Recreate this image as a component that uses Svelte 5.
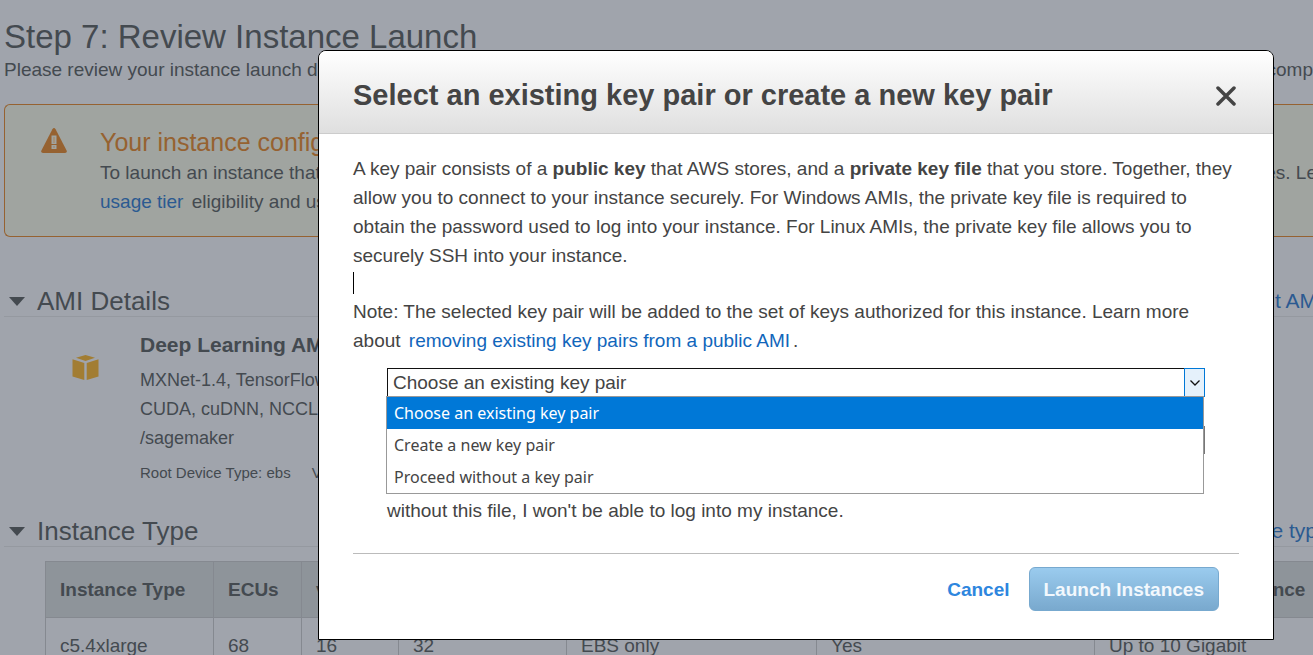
<script>
  const options = [
    'Choose an existing key pair',
    'Create a new key pair',
    'Proceed without a key pair'
  ];
  let chosen = $state(options[0]);
</script>

<div class="page">
  <header class="intro">
    <h1>Step 7: Review Instance Launch</h1>
    <p class="split"><span>Please review your instance launch details.</span><span>comp</span></p>
  </header>

  <section class="alert">
    <svg class="warn" viewBox="0 0 26 25" aria-hidden="true">
      <path d="M11.4 1.2Q13-1 14.6 1.2L25.6 22.4Q26.4 25 24 25H2Q-.4 25 .4 22.4Z" fill="currentColor" />
      <path d="M10.5 7.5h5v8.5h-5zM10.5 17h5v4h-5z" fill="#a0a4a0" />
      <path d="M12 9h2v6h-2zM12 18h2v2h-2z" fill="#a5937c" />
    </svg>
    <div class="alert-text">
      <h2>Your instance configuration</h2>
      <p class="split"><span>To launch an instance that's</span><span class="tail">es. Le</span></p>
      <p><a href="#tier">usage tier</a> eligibility and usage</p>
    </div>
  </section>

  <section class="ami">
    <div class="section-head">
      <svg class="caret" viewBox="0 0 16 9" aria-hidden="true"><path d="M0 0h16L8 9z" fill="currentColor" /></svg>
      <h2>AMI Details</h2>
      <a href="#ami" class="tail">Edit AM</a>
    </div>
    <div class="ami-body">
      <svg class="cube" viewBox="0 0 27 25" aria-hidden="true">
        <path d="M13.5 0 23 2.700 13.500 6 4 2.700zM.5 4.200l11.800 3.900V25L.5 21.500zM26.500 4.200 14.700 8.100V25l11.800-3.500z" fill="currentColor" />
      </svg>
      <div class="ami-text">
        <h3>Deep Learning AMI</h3>
        <p>MXNet-1.4, TensorFlow<br />CUDA, cuDNN, NCCL,<br />/sagemaker</p>
        <div class="facts"><span>Root Device Type: ebs</span><span>Virtualization</span></div>
      </div>
    </div>
  </section>

  <section class="types">
    <div class="section-head">
      <svg class="caret" viewBox="0 0 16 9" aria-hidden="true"><path d="M0 0h16L8 9z" fill="currentColor" /></svg>
      <h2>Instance Type</h2>
      <a href="#types" class="tail">Edit instance typ</a>
    </div>
    <table>
      <thead>
        <tr>
          <th class="c1">Instance Type</th><th class="c2">ECUs</th><th class="c3">vCPUs</th><th class="c4">Memory (GiB)</th>
          <th class="c5">Instance Storage</th><th class="c6">EBS-Optimized</th><th class="c7">Network Performance</th>
        </tr>
      </thead>
      <tbody>
        <tr><td>c5.4xlarge</td><td>68</td><td>16</td><td>32</td><td>EBS only</td><td>Yes</td><td>Up to 10 Gigabit</td></tr>
      </tbody>
    </table>
  </section>
</div>

<div class="overlay">
  <div class="modal" role="dialog" aria-modal="true" aria-labelledby="title">
    <div class="modal-head">
      <h2 id="title">Select an existing key pair or create a new key pair</h2>
      <button class="close" aria-label="Close">
        <svg viewBox="0 0 20 20" aria-hidden="true"><path d="M2 2l16 16M18 2 2 18" stroke="currentColor" stroke-width="3.500" stroke-linecap="round" /></svg>
      </button>
    </div>
    <div class="modal-body">
      <p>
        A key pair consists of a <b>public key</b> that AWS stores, and a <b>private key file</b> that you store. Together, they
        allow you to connect to your instance securely. For Windows AMIs, the private key file is required to obtain the
        password used to log into your instance. For Linux AMIs, the private key file allows you to securely SSH into your
        instance.
      </p>
      <div class="cursor-line"><span></span></div>
      <p>
        Note: The selected key pair will be added to the set of keys authorized for this instance. Learn more about
        <a href="#remove">removing existing key pairs from a public AMI</a>.
      </p>
      <div class="form">
        <div class="combo">
          <select aria-label="Key pair option" bind:value={chosen}>
            {#each options as option}<option>{option}</option>{/each}
          </select>
          <span class="arrow"><svg viewBox="0 0 10 6" aria-hidden="true"><path d="M.5.5 5 5 9.500.5" fill="none" stroke="#111" stroke-width="1.300" /></svg></span>
          <div class="menu" role="listbox" aria-label="Key pair options">
            {#each options as option}
              <button role="option" aria-selected={option === chosen} class:active={option === chosen} onclick={() => (chosen = option)}>{option}</button>
            {/each}
          </div>
        </div>
        <select class="pair" aria-label="Select a key pair"></select>
        <p>without this file, I won't be able to log into my instance.</p>
      </div>
      <div class="modal-foot">
        <button class="cancel">Cancel</button>
        <button class="launch">Launch Instances</button>
      </div>
    </div>
  </div>
</div>

<style>
  :global(body) {
    background: #a0a4ac;
    overflow: hidden;
  }
  h1, h2, h3, p { margin: 0; font-weight: 400; }
  a { text-decoration: none; }
  button { font: inherit; border: 0; background: none; padding: 0; cursor: pointer; }

  .page {
    height: 100vh;
    overflow: hidden;
    box-sizing: border-box;
    padding: 18px 0 0 4px;
    color: #444a50;
    font: 19px/29px "Liberation Sans", Arial, sans-serif;
    white-space: nowrap;
  }
  .page a { color: #2b5a91; }
  h1 { font-size: 33px; line-height: 37px; }
  .split { display: flex; justify-content: space-between; }
  .tail { margin-right: -4px; }
  .alert {
    display: flex;
    gap: 33px;
    margin-top: 20px;
    padding: 22px 0 20px 36px;
    border: 1px solid #966231;
    border-right: 0;
    border-radius: 6px 0 0 6px;
    background: #a0a4a0;
  }
  .alert p a { margin-right: 3px; }
  .warn { width: 26px; height: 25px; margin-top: 1px; color: #966231; flex: none; }
  .alert-text { flex: 1; }
  .alert h2 { color: #966231; font-size: 25px; line-height: 31px; }
  .section-head {
    display: flex;
    align-items: center;
    border-bottom: 1px solid #9599a0;
    line-height: 30px;
  }
  .section-head h2 { flex: 1; font-size: 26px; margin-left: 12px; }
  .section-head a { font-size: 21px; }
  .caret { width: 16px; height: 9px; margin-left: 5px; }
  .ami { margin-top: 49px; }
  .ami-body { display: flex; gap: 41px; padding: 13px 0 0 68px; }
  .cube { width: 27px; height: 25px; margin-top: 25px; color: #a27d33; }
  .ami-text h3 { font-size: 21px; font-weight: 700; line-height: 29px; }
  .ami-text p { font-size: 18px; margin-top: 7px; }
  .facts { display: flex; gap: 21px; font-size: 15px; line-height: 20px; margin-top: 10px; }
  .types { margin-top: 33px; }
  table { table-layout: fixed; width: 1300px; margin: 14px 0 0 41px; border-collapse: collapse; }
  th, td { border: 1px solid #858990; padding: 0 14px; height: 56px; text-align: left; box-sizing: border-box; }
  th { background: #8e949a; font-weight: 700; }
  .c1 { width: 168px; }
  .c2 { width: 88px; }
  .c3 { width: 97px; }
  .c4 { width: 168px; }
  .c5 { width: 250px; }
  .c6 { width: 278px; }

  .overlay {
    position: fixed;
    inset: 0;
    padding: 50px 39px 0 318px;
    color: #444;
    font: 19px/29px "Liberation Sans", Arial, sans-serif;
  }
  .modal { border: 1px solid #000; border-radius: 8px 8px 0 0; background: #fff; }
  .modal-head {
    display: flex;
    align-items: center;
    justify-content: space-between;
    padding: 27px 37px 20px 34px;
    border-bottom: 1px solid #ccc;
    border-radius: 7px 7px 0 0;
    background: linear-gradient(#fff, #dfdfdf);
  }
  .modal-head h2 { font-size: 29px; font-weight: 700; line-height: 35px; }
  .close { width: 20px; height: 20px; color: #444; }
  .close svg { display: block; }
  .modal-body { padding: 20px 34px 28px; }
  .modal-body a { color: #1166bb; margin: 0 3px; }
  .cursor-line { height: 27px; padding-top: 2px; box-sizing: border-box; }
  .cursor-line span { display: block; width: 1px; height: 22px; background: #000; }
  .form { padding: 13px 34px 28px; }
  .combo {
    position: relative;
    display: flex;
    height: 29px;
    box-sizing: border-box;
  }
  select {
    appearance: none;
    flex: 1;
    margin: 0;
    padding: 0 5px;
    border: 1px solid #111;
    border-right: 0;
    border-radius: 0;
    background: #fff;
    color: #444;
    font: inherit;
    line-height: 26px;
  }
  .arrow {
    display: grid;
    place-items: center;
    width: 21px;
    box-sizing: border-box;
    border: 1px solid #0078d7;
    background: #e5f1fb;
  }
  .arrow svg { width: 10px; height: 6px; }
  .menu {
    position: absolute;
    top: 28px;
    left: -1px;
    right: 1px;
    border: 1px solid #999;
    background: #fff;
    font-family: "Noto Sans", sans-serif;
    font-size: 16px;
  }
  .menu button { display: block; width: 100%; height: 32px; padding: 0 7px; text-align: left; color: #444; }
  .menu .active { background: #0078d7; color: #fff; }
  .pair { display: block; width: 100%; height: 28px; margin: 29px 0 42px; border: 1px solid #777; }
  .modal-foot {
    display: flex;
    justify-content: flex-end;
    align-items: center;
    gap: 19px;
    padding: 13px 20px 0 0;
    border-top: 1px solid #bbb;
    font-weight: 700;
  }
  .cancel { color: #2e86de; }
  .launch {
    height: 44px;
    padding: 0 14px;
    border: 1px solid #77a9cf;
    border-radius: 6px;
    background: linear-gradient(#9acbee, #79a9ce);
    color: #f2f8fd;
  }
</style>
